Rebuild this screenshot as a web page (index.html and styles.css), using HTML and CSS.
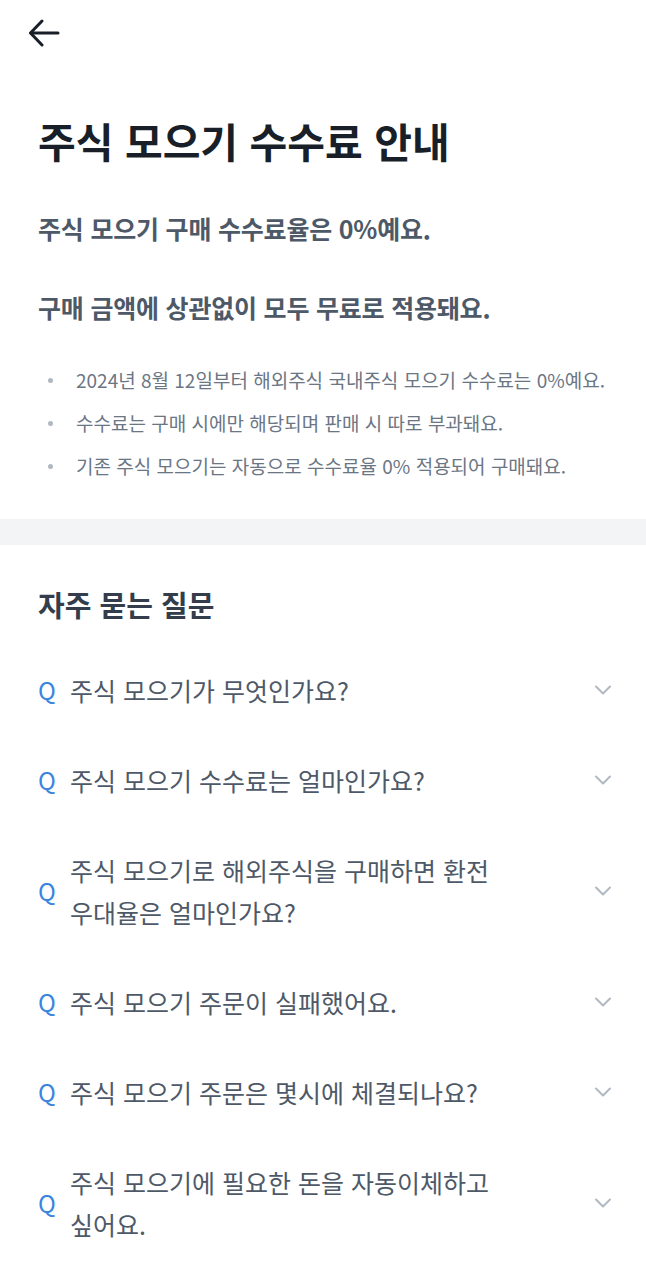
FILE: index.html
```html
<!DOCTYPE html>
<html lang="ko">
<head>
    <meta charset="UTF-8">
    <meta name="viewport" content="width=device-width, initial-scale=1.0">
    <title>주식 모으기 수수료 안내</title>
    <link rel="stylesheet" href="styles.css">
</head>
<body>
    <header class="topbar">
        <button class="back-btn" type="button" aria-label="뒤로">
            <svg width="32" height="28" viewBox="0 0 32 28" fill="none" stroke="#191f28" stroke-width="3" stroke-linecap="round" stroke-linejoin="round">
                <path d="M30 14H3"/>
                <path d="M14 2L2.5 14L14 26"/>
            </svg>
        </button>
    </header>

    <section class="intro">
        <h1 class="title">주식 모으기 수수료 안내</h1>
        <p class="lead">주식 모으기 구매 수수료율은 0%예요.</p>
        <p class="lead">구매 금액에 상관없이 모두 무료로 적용돼요.</p>
        <ul class="notes">
            <li>2024년 8월 12일부터 해외주식 국내주식 모으기 수수료는 0%예요.</li>
            <li>수수료는 구매 시에만 해당되며 판매 시 따로 부과돼요.</li>
            <li>기존 주식 모으기는 자동으로 수수료율 0% 적용되어 구매돼요.</li>
        </ul>
    </section>

    <div class="divider"></div>

    <section class="faq">
        <h2 class="faq-title">자주 묻는 질문</h2>
        <ul class="faq-list">
            <li class="faq-item">
                <span class="q">Q</span>
                <span class="question">주식 모으기가 무엇인가요?</span>
                <svg class="chevron" width="18" height="10" viewBox="0 0 18 10" fill="none" stroke="#b0b8c1" stroke-width="2" stroke-linecap="round" stroke-linejoin="round"><path d="M2 1.5L9 8.5L16 1.5"/></svg>
            </li>
            <li class="faq-item">
                <span class="q">Q</span>
                <span class="question">주식 모으기 수수료는 얼마인가요?</span>
                <svg class="chevron" width="18" height="10" viewBox="0 0 18 10" fill="none" stroke="#b0b8c1" stroke-width="2" stroke-linecap="round" stroke-linejoin="round"><path d="M2 1.5L9 8.5L16 1.5"/></svg>
            </li>
            <li class="faq-item">
                <span class="q">Q</span>
                <span class="question">주식 모으기로 해외주식을 구매하면 환전 우대율은 얼마인가요?</span>
                <svg class="chevron" width="18" height="10" viewBox="0 0 18 10" fill="none" stroke="#b0b8c1" stroke-width="2" stroke-linecap="round" stroke-linejoin="round"><path d="M2 1.5L9 8.5L16 1.5"/></svg>
            </li>
            <li class="faq-item">
                <span class="q">Q</span>
                <span class="question">주식 모으기 주문이 실패했어요.</span>
                <svg class="chevron" width="18" height="10" viewBox="0 0 18 10" fill="none" stroke="#b0b8c1" stroke-width="2" stroke-linecap="round" stroke-linejoin="round"><path d="M2 1.5L9 8.5L16 1.5"/></svg>
            </li>
            <li class="faq-item">
                <span class="q">Q</span>
                <span class="question">주식 모으기 주문은 몇시에 체결되나요?</span>
                <svg class="chevron" width="18" height="10" viewBox="0 0 18 10" fill="none" stroke="#b0b8c1" stroke-width="2" stroke-linecap="round" stroke-linejoin="round"><path d="M2 1.5L9 8.5L16 1.5"/></svg>
            </li>
            <li class="faq-item">
                <span class="q">Q</span>
                <span class="question">주식 모으기에 필요한 돈을 자동이체하고 싶어요.</span>
                <svg class="chevron" width="18" height="10" viewBox="0 0 18 10" fill="none" stroke="#b0b8c1" stroke-width="2" stroke-linecap="round" stroke-linejoin="round"><path d="M2 1.5L9 8.5L16 1.5"/></svg>
            </li>
        </ul>
    </section>
</body>
</html>
```

FILE: styles.css
```css
body {
    margin: 0;
    padding: 0;
    background-color: #fff;
    font-family: "Noto Sans CJK KR", "Noto Sans", sans-serif;
    color: #191f28;
}
.topbar {
    height: 66px;
    display: flex;
    align-items: center;
    padding-left: 28px;
}
.back-btn {
    background: none;
    border: 0;
    padding: 0;
    display: flex;
    cursor: pointer;
}
.intro {
    padding: 48px 38px 39px;
}
.title {
    margin: 0;
    font-size: 41px;
    line-height: 52px;
    font-weight: 700;
    color: #191f28;
}
.lead {
    margin: 45px 0 0;
    font-size: 25px;
    line-height: 34px;
    font-weight: 700;
    letter-spacing: -0.2px;
    color: #4e5968;
}
.notes {
    list-style: none;
    margin: 42px 0 0;
    padding: 0;
}
.notes li {
    position: relative;
    padding-left: 38px;
    font-size: 19px;
    line-height: 28px;
    color: #6b7684;
}
.notes li + li {
    margin-top: 15px;
}
.notes li::before {
    content: "";
    position: absolute;
    left: 10px;
    top: 12px;
    width: 5px;
    height: 5px;
    border-radius: 50%;
    background-color: #b0b8c1;
}
.divider {
    height: 26px;
    background-color: #f2f4f6;
}
.faq {
    padding: 41px 38px 0;
}
.faq-title {
    margin: 0;
    font-size: 29px;
    line-height: 36px;
    font-weight: 700;
    color: #333d4b;
}
.faq-list {
    list-style: none;
    margin: 23px 0 0;
    padding: 0;
}
.faq-item {
    display: flex;
    align-items: center;
    padding: 24px 0;
}
.q {
    width: 32px;
    flex-shrink: 0;
    font-size: 24px;
    line-height: 42px;
    color: #3a84e0;
}
.question {
    flex: 1;
    max-width: 440px;
    font-size: 25px;
    line-height: 42px;
    color: #4e5968;
}
.chevron {
    margin-left: auto;
    margin-right: -4px;
    flex-shrink: 0;
}
```
